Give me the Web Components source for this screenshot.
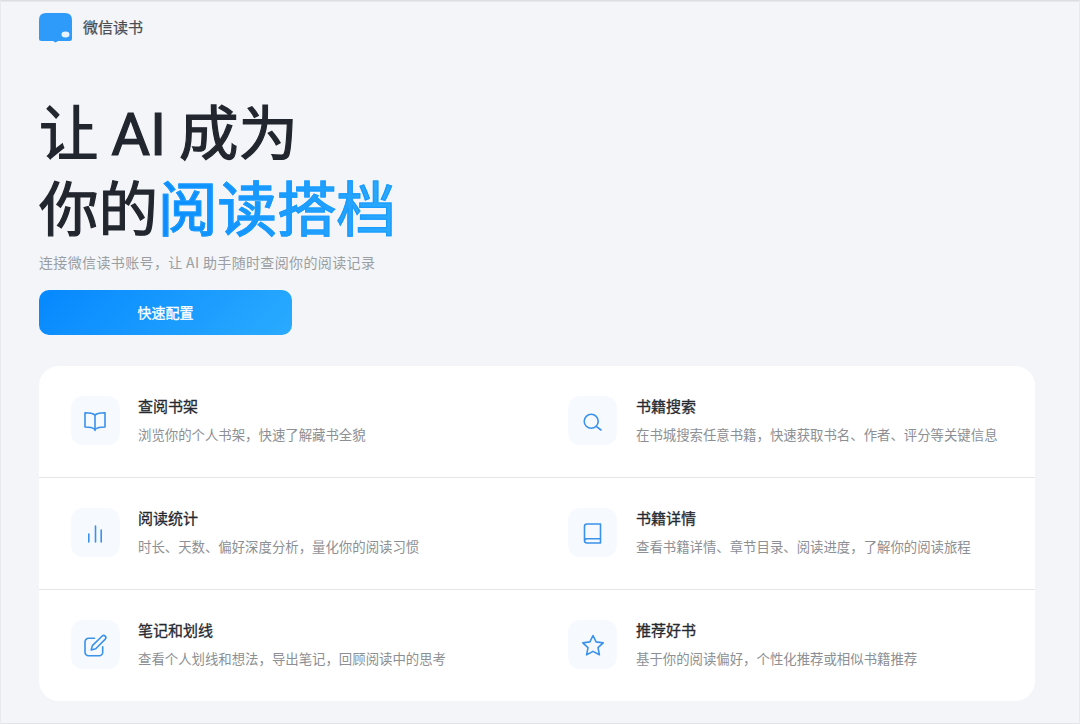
<!DOCTYPE html>
<html lang="zh-CN">
<head>
<meta charset="utf-8">
<title>微信读书</title>
<style>
  html, body { margin: 0; height: 100%; background: #f3f5f8; overflow: hidden; }
</style>
</head>
<body>
<app-shell>
  <brand-bar>微信读书</brand-bar>
  <hero-panel>
    <span slot="line1">让 AI 成为</span>
    <span slot="lead">你的</span>
    <span slot="accent">阅读搭档</span>
    <span slot="sub">连接微信读书账号，让 AI 助手随时查阅你的阅读记录</span>
    <span slot="cta">快速配置</span>
  </hero-panel>
  <feature-card>
    <feature-item icon="open-book" heading="查阅书架">浏览你的个人书架，快速了解藏书全貌</feature-item>
    <feature-item icon="search" heading="书籍搜索">在书城搜索任意书籍，快速获取书名、作者、评分等关键信息</feature-item>
    <feature-item icon="bars" heading="阅读统计">时长、天数、偏好深度分析，量化你的阅读习惯</feature-item>
    <feature-item icon="book" heading="书籍详情">查看书籍详情、章节目录、阅读进度，了解你的阅读旅程</feature-item>
    <feature-item icon="edit" heading="笔记和划线">查看个人划线和想法，导出笔记，回顾阅读中的思考</feature-item>
    <feature-item icon="star" heading="推荐好书">基于你的阅读偏好，个性化推荐或相似书籍推荐</feature-item>
  </feature-card>
</app-shell>

<script>
const FONT = '"Noto Sans CJK SC", "Noto Sans", sans-serif';

class AppShell extends HTMLElement {
  constructor() {
    super();
    const shadow = this.attachShadow({ mode: 'open' });
    shadow.innerHTML = `
      <style>
        :host {
          display: block;
          box-sizing: border-box;
          width: 1080px;
          height: 724px;
          padding: 0 44px 0 38px;
          background: #f3f5f8;
          border: 1px solid #e9eaed;
          border-top-color: #dcdde0;
          border-bottom-color: #e3e4e7;
          box-shadow: inset 0 1px 0 #e8e9ec;
          font-family: ${FONT};
          overflow: hidden;
        }
      </style>
      <slot></slot>
    `;
  }
}

class BrandBar extends HTMLElement {
  constructor() {
    super();
    const shadow = this.attachShadow({ mode: 'open' });
    shadow.innerHTML = `
      <style>
        :host {
          display: flex;
          align-items: center;
          gap: 11px;
          height: 54px;
          padding-bottom: 3px;
          box-sizing: border-box;
          color: #4a4d52;
          font-size: 15px;
          font-weight: 400;
          -webkit-text-stroke: 0.250px #4a4d52;
        }
        svg { display: block; flex: none; margin-bottom: -2px; }
      </style>
      <svg width="33" height="30" viewBox="0 0 33 30">
        <path d="M7 0H26Q33 0 33 7V25.500Q33 28 30.500 28H19L16.500 29.600L14 28H2.500Q0 28 0 25.500V7Q0 0 7 0Z" fill="#2e9bfb"/>
        <ellipse cx="26.500" cy="21.500" rx="4" ry="3" fill="#e8f4ff"/>
      </svg>
      <slot></slot>
    `;
  }
}

class HeroPanel extends HTMLElement {
  constructor() {
    super();
    const shadow = this.attachShadow({ mode: 'open' });
    shadow.innerHTML = `
      <style>
        :host { display: block; padding-top: 42px; }
        h1 {
          margin: 0;
          font-family: Roboto, ${FONT};
          font-size: 59.500px;
          line-height: 76px;
          font-weight: 400;
          word-spacing: -2px;
          color: #22262e;
          -webkit-text-stroke: 1.200px #22262e;
          white-space: nowrap;
        }
        h1 div { height: 76px; }
        .accent {
          background: linear-gradient(90deg, #0a8cff, #2aaaff);
          -webkit-background-clip: text;
          background-clip: text;
          color: transparent;
          -webkit-text-stroke: 1.200px #1a9bff;
        }
        p {
          margin: 3px 0 0;
          font-size: 14px;
          letter-spacing: 0.360px;
          line-height: 20px;
          color: #9a9ea3;
        }
        button {
          display: block;
          margin-top: 18px;
          width: 253px;
          height: 45px;
          padding: 0 0 2px;
          border: 0;
          border-radius: 10px;
          background: linear-gradient(135deg, #0688ff, #2aabff);
          color: #fff;
          font: 400 14px ${FONT};
          -webkit-text-stroke: 0.300px #fff;
        }
      </style>
      <h1>
        <div><slot name="line1"></slot></div>
        <div><slot name="lead"></slot><span class="accent"><slot name="accent"></slot></span></div>
      </h1>
      <p><slot name="sub"></slot></p>
      <button type="button"><slot name="cta"></slot></button>
    `;
  }
}

class FeatureCard extends HTMLElement {
  constructor() {
    super();
    const shadow = this.attachShadow({ mode: 'open' });
    shadow.innerHTML = `
      <style>
        :host {
          display: grid;
          grid-template-columns: 498px 498px;
          grid-template-rows: 112px 112px 111px;
          margin-top: 31px;
          width: 996px;
          background: #fff;
          border-radius: 20px;
          overflow: hidden;
        }
      </style>
      <slot></slot>
    `;
  }
}

const ICONS = {
  'open-book': '<path d="M11 6C9 4.500 6.800 3.800 1 3.800V18C6.800 18 9 18.700 11 20.300C13 18.700 15.200 18 21 18V3.800C15.200 3.800 13 4.500 11 6Z"/><path d="M11 6V21.500"/>',
  'search': '<circle cx="10.200" cy="12.300" r="7"/><path d="M15.300 17.300L20 21"/>',
  'bars': '<path d="M4.800 13V21"/><path d="M11.500 5V21"/><path d="M17.200 9V21"/>',
  'book': '<path d="M3.500 20V5.500A2.500 2.500 0 0 1 6 3H19.500V22H6A2.500 2.500 0 0 1 3.500 19.500V20.300A2.500 2.500 0 0 1 6 17.800H19.500"/>',
  'edit': '<path d="M10.500 5.300H4.500A3.500 3.500 0 0 0 1 8.800V19.300A3.500 3.500 0 0 0 4.500 22.800H15.200A3.500 3.500 0 0 0 18.700 19.300V13.800"/><path d="M18.200 3A2.200 2.200 0 0 1 21.300 6.100L11.700 15.800L7.200 17L8.400 12.600Z"/>',
  'star': '<path d="M12 2.500L15.100 8.900L22.200 9.900L17 14.700L18.400 21.800L12 18.400L5.600 21.800L7 14.700L1.800 9.900L8.900 8.900Z"/>'
};

class FeatureItem extends HTMLElement {
  constructor() {
    super();
    const shadow = this.attachShadow({ mode: 'open' });
    const icon = ICONS[this.getAttribute('icon')] || '';
    shadow.innerHTML = `
      <style>
        :host {
          display: flex;
          align-items: flex-start;
          box-sizing: border-box;
          padding: 30px 0 0 32px;
          border-bottom: 1px solid #e4e5e7;
          --text-gap: 18px;
        }
        :host(:nth-child(even)) { padding-left: 31px; --text-gap: 19px; }
        :host(:nth-last-child(-n+2)) { border-bottom: 0; }
        .tile {
          flex: none;
          display: flex;
          align-items: center;
          justify-content: center;
          width: 49px;
          height: 49px;
          border-radius: 12px;
          background: #f6faff;
        }
        svg {
          width: 24px;
          height: 24px;
          fill: none;
          stroke: #3a92ea;
          stroke-width: 1.600;
          stroke-linecap: round;
          stroke-linejoin: round;
        }
        .text { margin: -1px 0 0 var(--text-gap); }
        h3 {
          margin: 0;
          font-size: 15px;
          line-height: 22px;
          font-weight: 400;
          color: #26292f;
          -webkit-text-stroke: 0.300px #26292f;
        }
        p {
          margin: 7px 0 0;
          font-size: 13.400px;
          line-height: 20px;
          color: #8c8f94;
          white-space: nowrap;
        }
      </style>
      <div class="tile"><svg viewBox="0 0 24 24">${icon}</svg></div>
      <div class="text">
        <h3>${this.getAttribute('heading') || ''}</h3>
        <p><slot></slot></p>
      </div>
    `;
  }
}

customElements.define('app-shell', AppShell);
customElements.define('brand-bar', BrandBar);
customElements.define('hero-panel', HeroPanel);
customElements.define('feature-card', FeatureCard);
customElements.define('feature-item', FeatureItem);
</script>
</body>
</html>
